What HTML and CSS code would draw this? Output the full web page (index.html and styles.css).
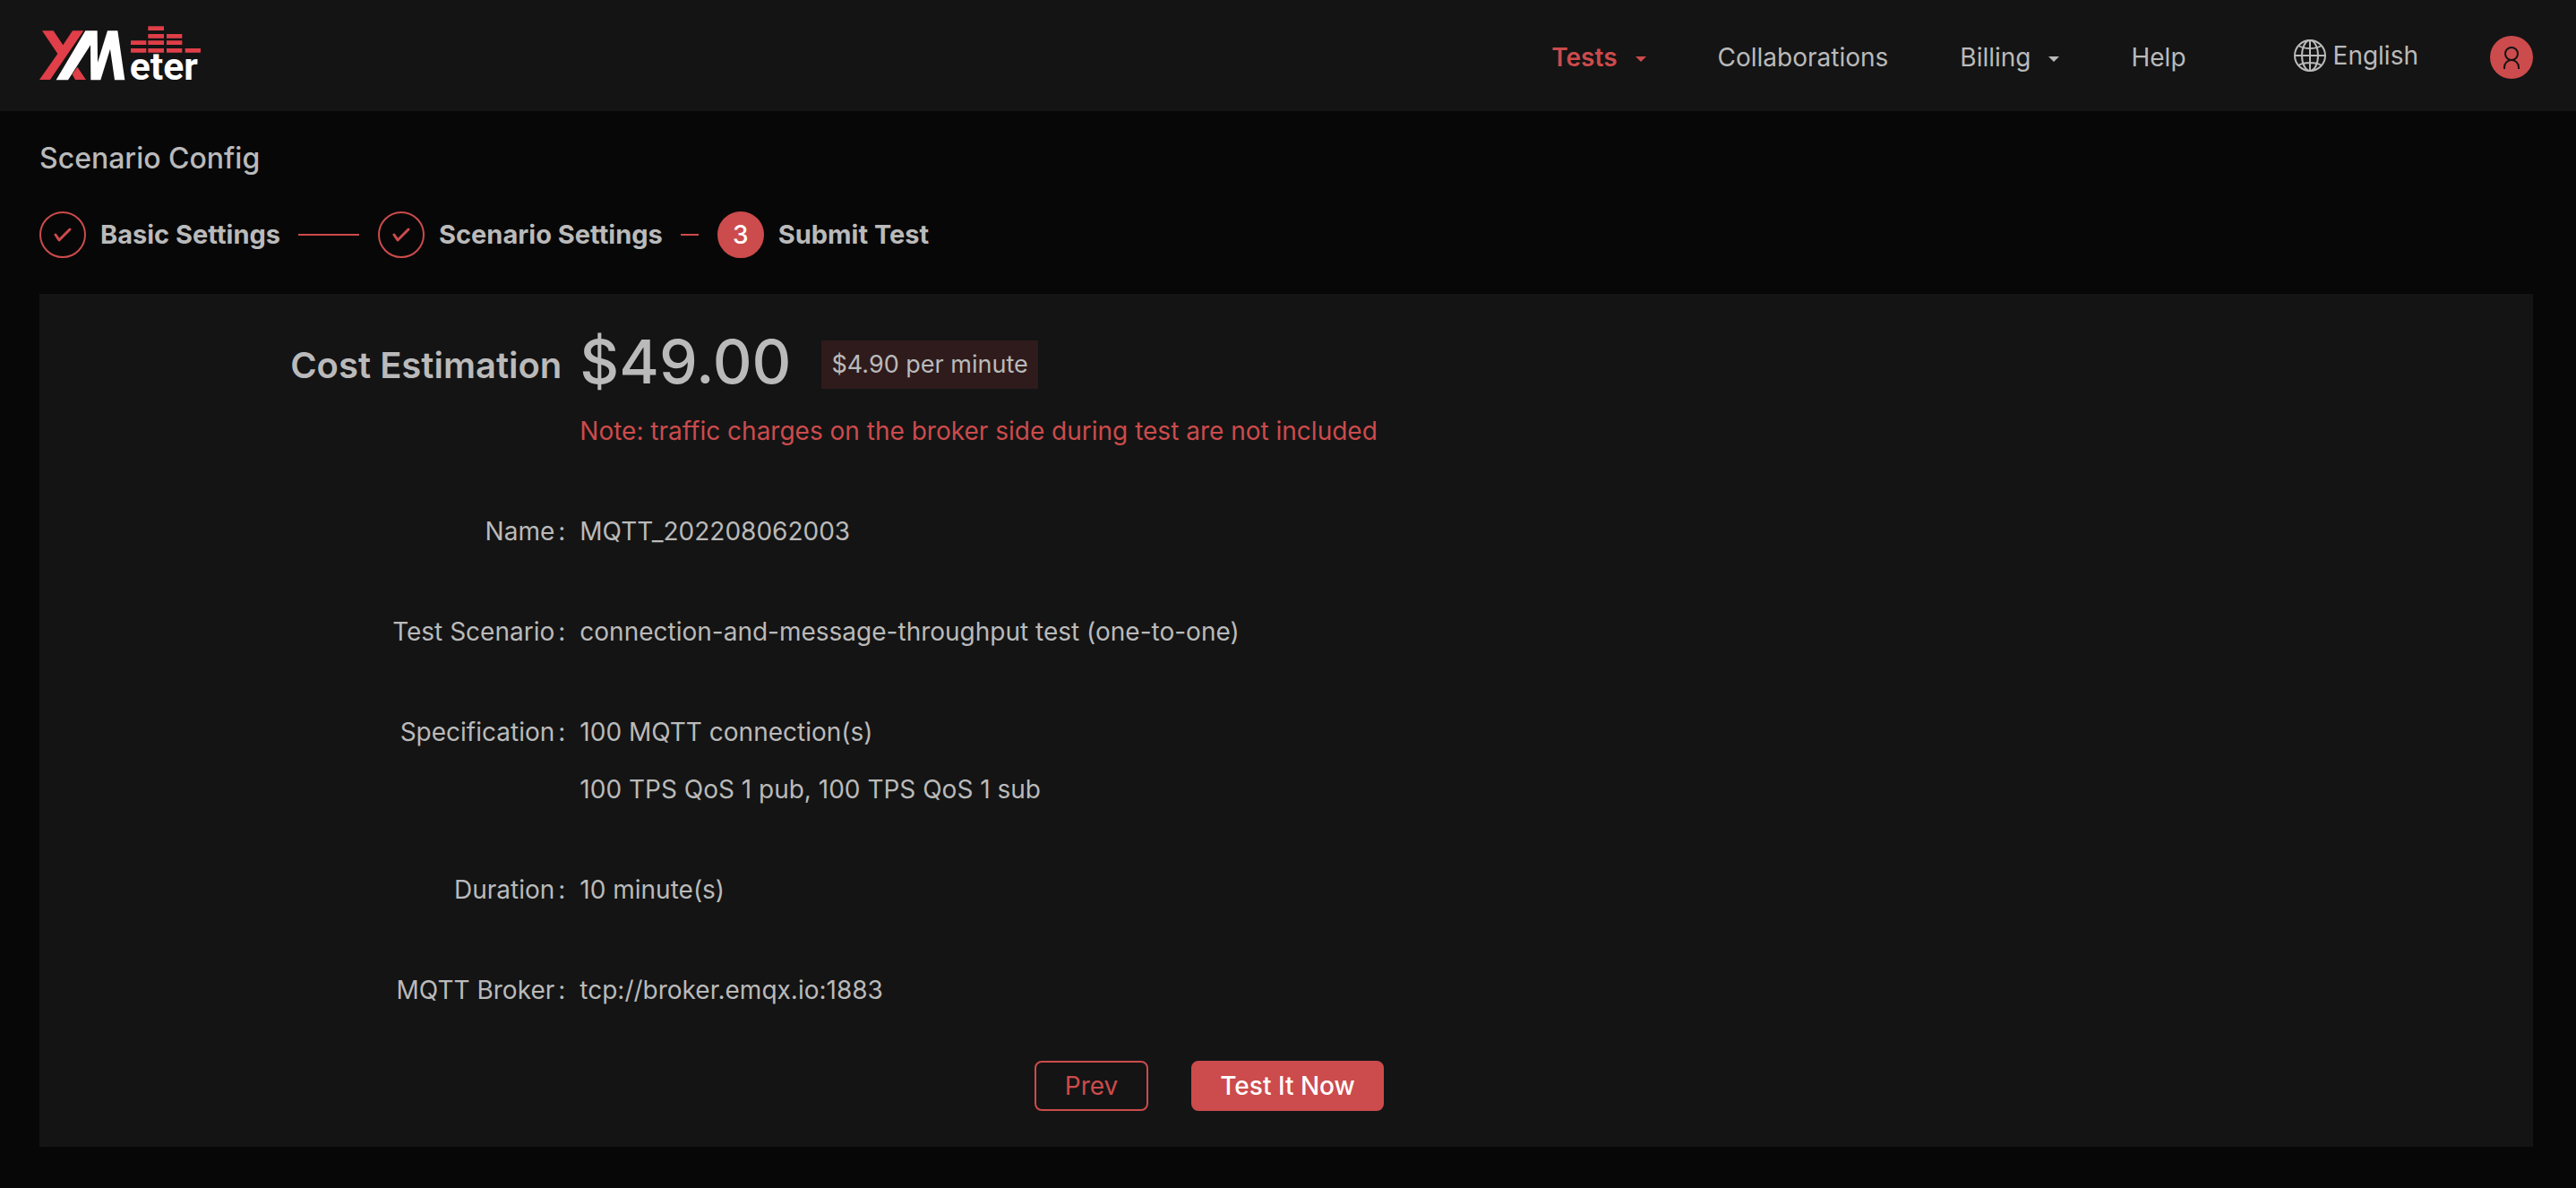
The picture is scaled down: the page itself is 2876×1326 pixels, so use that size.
FILE: index.html
```html
<!DOCTYPE html>
<html lang="en">
<head>
<meta charset="utf-8">
<title>XMeter - Scenario Config</title>
<link rel="stylesheet" href="styles.css">
</head>
<body>
<header class="header">
  <a class="logo" href="#" aria-label="XMeter">
    <svg viewBox="42 28 540 210" width="180" height="70" aria-hidden="true">
      <g fill="#e03e48">
        <path d="M51 44H89L121 92L153 44H190L78 208H42L103 121Z"/>
        <path d="M169 165L198 208H162L152 190Z"/>
        <path d="M406 29h53v14h-53zM406 55h53v14h-53zM468 55h52v14h-52zM348 77h52v14h-52zM406 77h53v14h-53zM468 77h52v14h-52zM348 103h52v14h-52zM406 103h53v14h-53zM468 103h52v14h-52zM530 103h52v14h-52z"/>
      </g>
      <path fill="#fff" d="M196 44H236L237 150L270 44H304L328 209H294L279 105L247 209H214L213 92L138 209H98Z"/>
      <text class="logo-text" x="344" y="208">eter</text>
    </svg>
  </a>
  <nav class="nav">
    <a class="nav-item nav-item-active" href="#">Tests<span class="caret"></span></a>
    <a class="nav-item" href="#">Collaborations</a>
    <a class="nav-item" href="#">Billing<span class="caret"></span></a>
    <a class="nav-item" href="#">Help</a>
    <button class="nav-item language" type="button">
      <svg viewBox="0 0 36 36" width="36" height="36" fill="none" stroke="currentColor" stroke-width="2" aria-hidden="true">
        <circle cx="18" cy="18" r="17"/>
        <ellipse cx="18" cy="18" rx="9" ry="17"/>
        <path d="M18 1V35M1 18H35M5 7C12 11 24 11 31 7M5 29C12 25 24 25 31 29"/>
      </svg>
      English
    </button>
    <button class="avatar" type="button" aria-label="Account">
      <svg viewBox="0 0 48 48" width="48" height="48" fill="none" stroke="#141414" stroke-width="2" aria-hidden="true">
        <circle cx="24" cy="20" r="7"/>
        <path d="M16 37V35A8 8 0 0 1 32 35V37"/>
      </svg>
    </button>
  </nav>
</header>

<main class="content">
  <h1 class="page-title">Scenario Config</h1>
  <ol class="steps">
    <li class="step">
      <span class="step-icon"><svg viewBox="0 0 20 16" width="20" height="16" aria-hidden="true"><path d="M2 8L6 14L18 2"/></svg></span>
      <span class="step-title">Basic Settings</span>
      <span class="step-line step-line-long"></span>
    </li>
    <li class="step">
      <span class="step-icon"><svg viewBox="0 0 20 16" width="20" height="16" aria-hidden="true"><path d="M2 8L6 14L18 2"/></svg></span>
      <span class="step-title">Scenario Settings</span>
      <span class="step-line"></span>
    </li>
    <li class="step">
      <span class="step-icon step-icon-current">3</span>
      <span class="step-title">Submit Test</span>
    </li>
  </ol>

  <section class="card">
    <dl class="details">
      <dt class="cost-label">Cost Estimation</dt>
      <dd>
        <div class="cost-row"><span class="price">$49.00</span><span class="rate">$4.90 per minute</span></div>
        <p class="note">Note: traffic charges on the broker side during test are not included</p>
      </dd>
      <dt class="label">Name</dt>
      <dd>MQTT_202208062003</dd>
      <dt class="label">Test Scenario</dt>
      <dd>connection-and-message-throughput test (one-to-one)</dd>
      <dt class="label">Specification</dt>
      <dd>100 MQTT connection(s)<br>100 TPS QoS 1 pub, 100 TPS QoS 1 sub</dd>
      <dt class="label">Duration</dt>
      <dd>10 minute(s)</dd>
      <dt class="label">MQTT Broker</dt>
      <dd>tcp://broker.emqx.io:1883</dd>
    </dl>
    <div class="actions">
      <button class="button" type="button">Prev</button>
      <button class="button button-primary" type="button">Test It Now</button>
    </div>
  </section>
</main>
</body>
</html>
```
FILE: styles.css
```css
* {
  box-sizing: border-box;
}

body {
  margin: 0;
  background: #070707;
  color: #bababa;
  font: 28px/64px Inter, "Liberation Sans", sans-serif;
}

button {
  font: inherit;
  cursor: pointer;
}

.header {
  display: flex;
  align-items: center;
  justify-content: space-between;
  height: 124px;
  padding: 3px 48px 0 44px;
  background: #141414;
}

.logo,
.logo svg {
  display: block;
}

.logo-text {
  font: 700 128px Roboto, sans-serif;
  fill: #fff;
}

.nav {
  display: flex;
  align-items: center;
  gap: 80px;
}

.nav-item {
  display: flex;
  align-items: center;
  color: inherit;
  text-decoration: none;
}

.nav-item-active {
  color: #cc4b4c;
  font-weight: 600;
}

.caret {
  margin: 4px 0 0 20px;
  border: 6px solid transparent;
  border-top-color: currentColor;
  border-bottom: 0;
}

.language {
  gap: 8px;
  margin-left: 40px;
  padding: 0 0 4px;
  border: 0;
  background: none;
}

.avatar {
  width: 48px;
  height: 48px;
  padding: 0;
  border: 0;
  border-radius: 50%;
  background: #cc4b4c;
}

.avatar svg {
  display: block;
}

.content {
  padding: 21px 48px 46px 44px;
}

.page-title {
  margin: 0 0 27px;
  font-size: 32px;
  font-weight: 500;
}

.steps {
  display: flex;
  gap: 21px;
  margin: 0 0 40px;
  padding: 0;
  list-style: none;
}

.step {
  display: flex;
  align-items: center;
  line-height: 52px;
}

.step-icon {
  display: flex;
  align-items: center;
  justify-content: center;
  width: 52px;
  height: 52px;
  margin-right: 16px;
  border: 2px solid #cc4b4c;
  border-radius: 50%;
}

.step-icon path {
  fill: none;
  stroke: #cc4b4c;
  stroke-width: 3;
  stroke-linecap: round;
  stroke-linejoin: round;
}

.step-icon-current {
  background: #cc4b4c;
  color: #fff;
  font-weight: 500;
}

.step-title {
  font-size: 29px;
  font-weight: 700;
}

.step-line {
  width: 20px;
  height: 2px;
  margin-left: 20px;
  background: #cc4b4c;
}

.step-line-long {
  width: 68px;
}

.card {
  padding: 40px;
  background: #141414;
}

.details {
  display: grid;
  grid-template-columns: 5fr 19fr;
  row-gap: 48px;
  margin: 0 0 47px;
}

dt {
  text-align: right;
}

dd {
  margin: 0;
}

.label {
  padding-right: 16px;
}

.label::after {
  content: ":";
  margin-left: 4px;
}

.cost-label {
  padding: 8px 20px 0 0;
  font-size: 40px;
  font-weight: 600;
}

.cost-row {
  display: flex;
  align-items: center;
  gap: 34px;
  height: 77px;
  margin-bottom: 4px;
}

.price {
  padding-bottom: 8px;
  font-size: 68px;
  font-weight: 500;
}

.rate {
  padding: 0 11px;
  background: #2f1b1c;
  font-size: 27px;
  line-height: 54px;
}

.note {
  margin: 0;
  color: #cc4b4c;
}

.actions {
  display: flex;
  gap: 48px;
  padding-left: 39.6%;
}

.button {
  height: 56px;
  padding: 0 32px;
  border: 2px solid #cc4b4c;
  border-radius: 8px;
  background: transparent;
  color: #cc4b4c;
  line-height: 52px;
}

.button-primary {
  padding: 0 30px;
  background: #cc4b4c;
  color: #fff;
  font-weight: 500;
}
```
